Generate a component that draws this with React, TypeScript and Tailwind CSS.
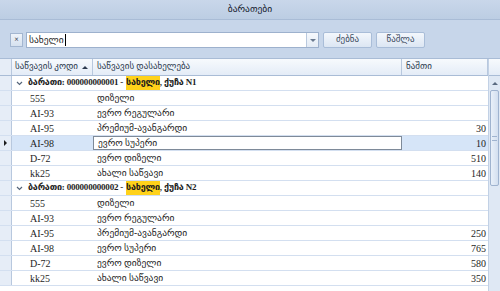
import React from "react";

type Row =
	| { kind: "group"; num: string; street: string }
	| { kind: "item"; code: string; name: string; qty?: string; selected?: boolean };

const rows: Row[] = [
	{ kind: "group", num: "000000000001", street: "ქუჩა N1" },
	{ kind: "item", code: "555", name: "დიზელი" },
	{ kind: "item", code: "AI-93", name: "ევრო რეგულარი" },
	{ kind: "item", code: "AI-95", name: "პრემიუმ-ავანგარდი", qty: "30" },
	{ kind: "item", code: "AI-98", name: "ევრო სუპერი", qty: "10", selected: true },
	{ kind: "item", code: "D-72", name: "ევრო დიზელი", qty: "510" },
	{ kind: "item", code: "kk25", name: "ახალი საწვავი", qty: "140" },
	{ kind: "group", num: "000000000002", street: "ქუჩა N2" },
	{ kind: "item", code: "555", name: "დიზელი" },
	{ kind: "item", code: "AI-93", name: "ევრო რეგულარი" },
	{ kind: "item", code: "AI-95", name: "პრემიუმ-ავანგარდი", qty: "250" },
	{ kind: "item", code: "AI-98", name: "ევრო სუპერი", qty: "765" },
	{ kind: "item", code: "D-72", name: "ევრო დიზელი", qty: "580" },
	{ kind: "item", code: "kk25", name: "ახალი საწვავი", qty: "350" },
];

function ToolButton({ label }: { label: string }) {
	return (
		<button
			type="button"
			className="w-[49px] h-[16px] ml-[4px] flex items-center justify-center border border-[#a9bdd8] rounded-[2px] bg-gradient-to-b from-[#f3f7fc] to-[#dce6f3] text-[9px] text-[#3b4a5e] whitespace-nowrap"
		>
			{label}
		</button>
	);
}

export default function App() {
	return (
		<div
			className="w-[500px] h-[291px] overflow-hidden bg-[#c7d6ea] text-[#1e1e1e] flex flex-col"
			style={{ fontFamily: '"Liberation Serif", "DejaVu Sans", serif' }}
		>
			{/* Title */}
			<div className="h-[20px] shrink-0 flex items-center justify-center bg-gradient-to-b from-[#c9d7ea] to-[#bccde3] border-b border-[#a9bcd6] text-[9.5px] text-[#15202e]">
				ბარათები
			</div>

			{/* Toolbar */}
			<div className="h-[38px] shrink-0 flex items-center pl-[10px] pt-[2px]">
				<button
					type="button"
					className="w-[13px] h-[14px] flex items-center justify-center border border-[#a3b6d0] bg-gradient-to-b from-[#eef3fa] to-[#d6e1ef] text-[8px] font-bold text-[#445] leading-none"
				>
					×
				</button>
				<div className="ml-[3px] flex h-[16px] border border-[#9db1cd] bg-white">
					<div className="w-[279px] flex items-center pl-[2px] text-[9.5px]">
						<span>სახელი</span>
						<span className="w-px h-[12px] bg-black ml-[1px]" />
					</div>
					<div className="w-[12px] border-l border-[#b9c9de] bg-gradient-to-b from-[#f6f9fd] to-[#e3ebf5] flex items-center justify-center">
						<span className="block w-0 h-0 border-l-[3px] border-r-[3px] border-t-[3px] border-l-transparent border-r-transparent border-t-[#6a7a90]" />
					</div>
				</div>
				<ToolButton label="ძებნა" />
				<ToolButton label="წაშლა" />
			</div>

			{/* Grid */}
			<div className="flex-1 min-h-0 border-t border-[#a9bcd6] bg-white flex text-[10px]">
				<div className="flex-1 min-w-0 flex flex-col">
					{/* Header */}
					<div className="h-[17px] shrink-0 flex bg-gradient-to-b from-[#f7fafd] to-[#e4ecf7] border-b border-[#a9bcd6] text-[#2c3a4e] text-[9px] whitespace-nowrap">
						<div className="w-[12px] shrink-0 border-r border-[#b8c8de] bg-[#e6edf7]" />
						<div className="w-[81px] shrink-0 flex items-center pl-[3px] border-r border-[#b8c8de]">
							<span className="flex-1">საწვავის კოდი</span>
							<span className="mr-[4px] block w-0 h-0 border-l-[3px] border-r-[3px] border-b-[3px] border-l-transparent border-r-transparent border-b-[#2c3a4e]" />
						</div>
						<div className="w-[309px] shrink-0 flex items-center pl-[4px] border-r border-[#b8c8de]">
							საწვავის დასახელება
						</div>
						<div className="flex-1 flex items-center pl-[4px] border-r border-[#b8c8de]">ნაშთი</div>
					</div>

					{/* Rows */}
					{rows.map((r, i) =>
						r.kind === "group" ? (
							<div key={i} className="h-[15px] shrink-0 flex border-b border-[#d3dff0]">
								<div className="w-[12px] shrink-0 border-r border-[#b8c8de] bg-[#e6edf7]" />
								<div className="w-[15px] shrink-0 flex items-center justify-center">
									<svg width="7" height="5" viewBox="0 0 7 5">
										<path d="M1 1l2.5 2.5L6 1" fill="none" stroke="#55657a" strokeWidth="1.2" />
									</svg>
								</div>
								<div className="flex items-center font-bold whitespace-nowrap pl-[1px] text-[9px] tracking-[-0.2px]">
									ბარათი: {r.num} - <span className="bg-[#ffd21a] ml-[3px]">სახელი</span>, {r.street}
								</div>
							</div>
						) : (
							<div
								key={i}
								className={`h-[15px] shrink-0 flex border-b border-[#d3dff0] whitespace-nowrap ${r.selected ? "bg-[#d6e5f8]" : ""}`}
							>
								<div className="w-[12px] shrink-0 border-r border-[#b8c8de] bg-[#e6edf7] flex items-center justify-center">
									{r.selected && (
										<span className="block w-0 h-0 border-t-[3px] border-b-[3px] border-l-[3px] border-t-transparent border-b-transparent border-l-[#1e1e1e]" />
									)}
								</div>
								<div className="w-[81px] shrink-0 flex items-center pl-[18px]">{r.code}</div>
								<div
									className={`w-[309px] shrink-0 flex items-center pl-[4px] text-[9.5px] ${r.selected ? "bg-white border border-[#7e8a99]" : ""}`}
								>
									{r.name}
								</div>
								<div className="flex-1 flex items-center justify-end pr-[2px]">{r.qty}</div>
							</div>
						),
					)}
				</div>

				{/* Scrollbar */}
				<div className="w-[12px] shrink-0 flex flex-col bg-[#dfe8f4] border-l border-[#c2d1e5]">
					<div className="h-[17px] shrink-0 bg-gradient-to-b from-[#f7fafd] to-[#e4ecf7] border-b border-[#a9bcd6]" />
					<div className="h-[14px] shrink-0 flex items-center justify-center">
						<span className="block w-0 h-0 border-l-[3px] border-r-[3px] border-b-[3px] border-l-transparent border-r-transparent border-b-[#5a6a80]" />
					</div>
					<div className="mx-[1px] h-[96px] rounded-[2px] border border-[#9fb3cf] bg-gradient-to-r from-[#e9f0f9] to-[#d3dfef] flex items-center justify-center">
						<span className="block w-[5px] h-[5px] border-y border-[#9fb3cf]" />
					</div>
				</div>
			</div>
		</div>
	);
}
